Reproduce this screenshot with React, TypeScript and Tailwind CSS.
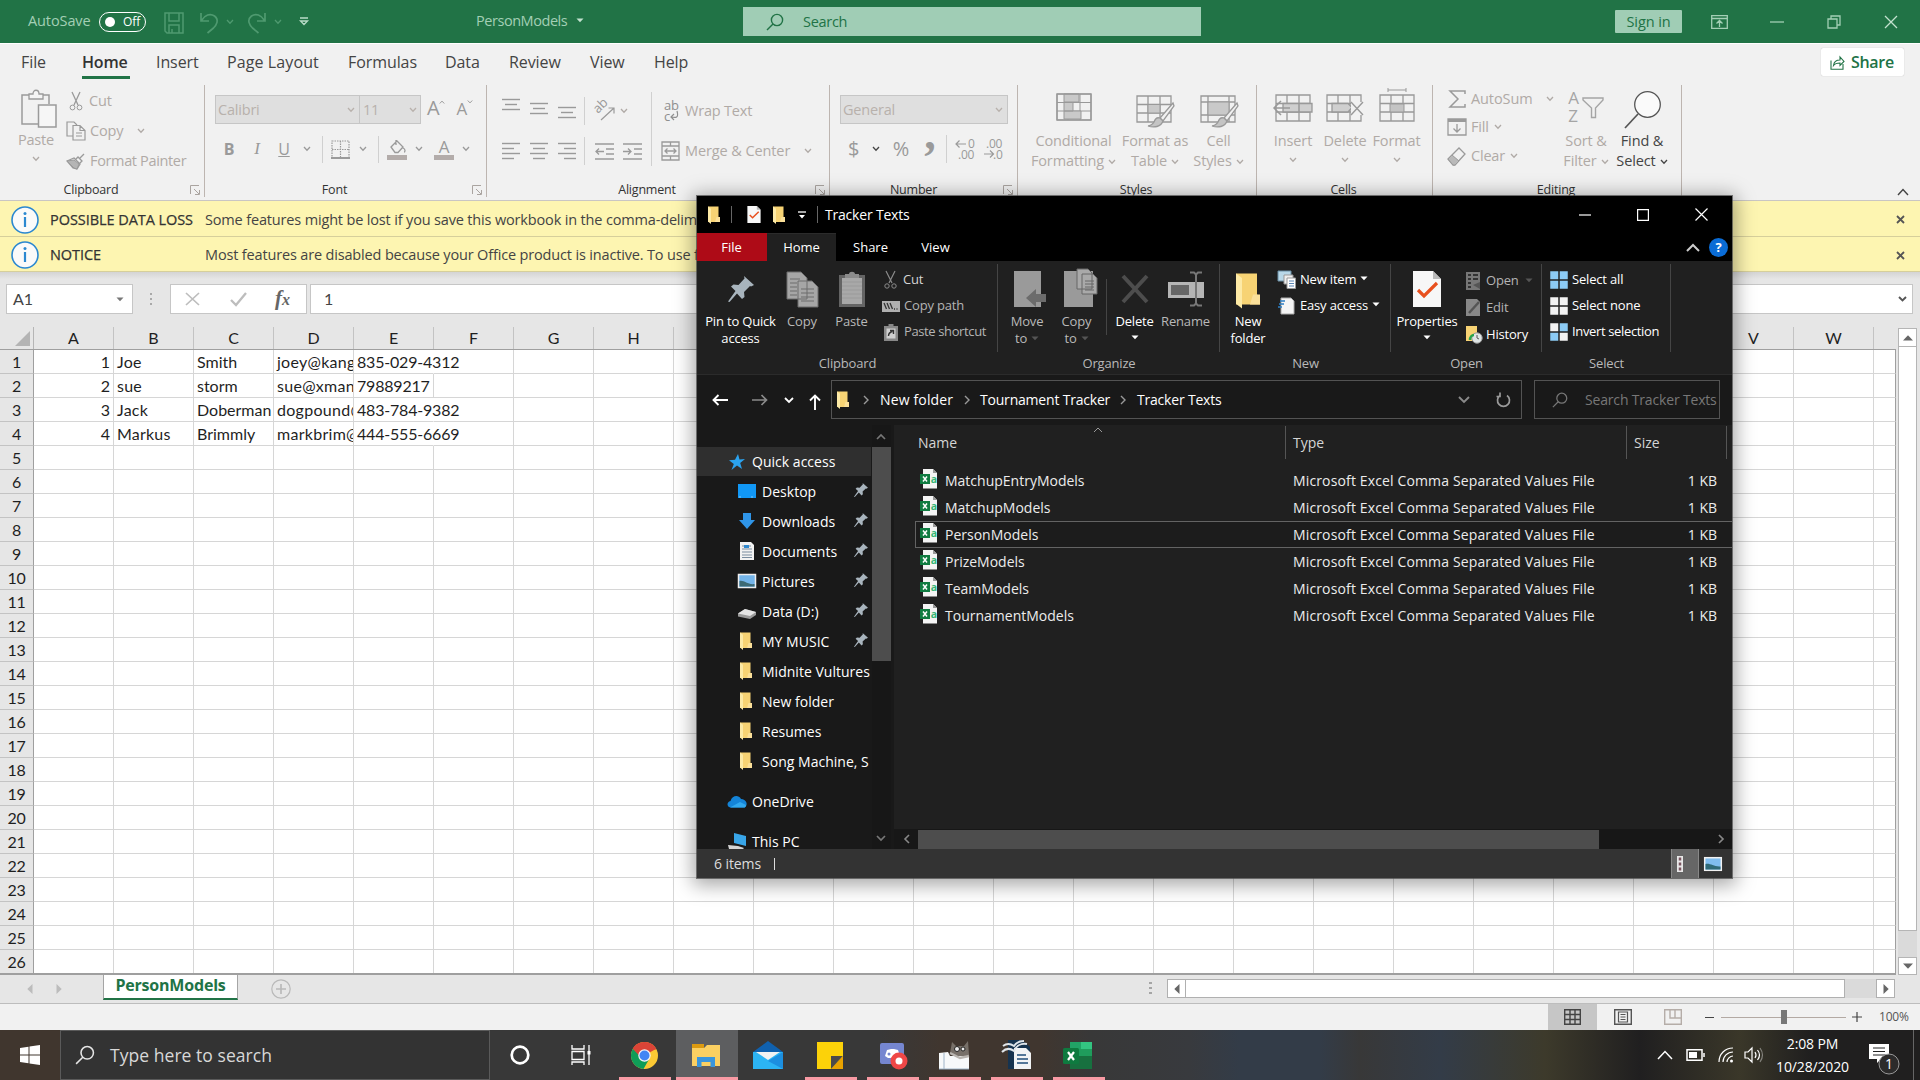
import React from "react";

type P = { className?: string; children?: React.ReactNode };

/* ---------- shared small pieces ---------- */

function Svg({ w, h, c = "", vb, children }: { w: number; h: number; c?: string; vb?: string; children?: React.ReactNode }) {
  return (
    <svg width={w} height={h} viewBox={vb ?? `0 0 ${w} ${h}`} fill="none" stroke="currentColor" className={`shrink-0 overflow-visible ${c}`}>
      {children}
    </svg>
  );
}

const Chev = ({ c = "" }: { c?: string }) => (
  <Svg w={8} h={6} c={c}><path d="M1 1l3 3.2L7 1" strokeWidth="1.3" /></Svg>
);
const Tri = ({ c = "" }: { c?: string }) => (
  <Svg w={8} h={5} c={c}><path d="M0.5 .5h7L4 4.3z" fill="currentColor" stroke="none" /></Svg>
);
const BigTri = ({ c = "" }: { c?: string }) => (
  <Svg w={10} h={6} c={c}><path d="M0 .5h10L5 5.700z" fill="currentColor" stroke="none" /></Svg>
);
const Rule = ({ className = "" }: P) => <div className={`w-px shrink-0 ${className}`} />;

const Folder = ({ w = 14, h = 18, c = "" }: { w?: number; h?: number; c?: string }) => (
  <Svg w={w} h={h} vb="0 0 14 18" c={c}>
    <path d="M1 0.5h10.5v10.5l1.5 1v4H1z" fill="#f7d374" stroke="none" />
    <path d="M9.5 11h3.5v5H8z" fill="#fbe09a" stroke="none" />
    <path d="M1 .5l3 2.3V18L1 15.6z" fill="#fdeaa6" stroke="none" />
  </Svg>
);

const Magnifier = ({ s = 18, c = "" }: { s?: number; c?: string }) => (
  <Svg w={s} h={s} vb="0 0 18 18" c={c}>
    <circle cx="11" cy="7" r="5.6" strokeWidth="1.4" /><path d="M7 11L1 17" strokeWidth="1.4" />
  </Svg>
);

const Check = ({ w, h, c = "" }: { w: number; h: number; c?: string }) => (
  <Svg w={w} h={h} vb="0 0 28 36" c={c}>
    <path d="M0 0h20l8 8v28H0z" fill="#f7f7f7" stroke="none" /><path d="M20 0v8h8z" fill="#b9b9b9" stroke="none" />
    <path d="M5 19l6 6L24 12" stroke="#e8501e" strokeWidth="3.2" />
  </Svg>
);

/* ---------- Excel: title bar and tabs ---------- */

function TitleBar() {
  return (
    <div className="flex h-[43px] items-center bg-[#217346] pl-[28px] text-[14.5px] tracking-[-0.1px] text-[#a3cfb5]">
      <div className="w-[67px] shrink-0 pb-[1px]">AutoSave</div>
      <div className="ml-[4px] flex h-[20px] w-[47px] shrink-0 items-center rounded-full border border-white pl-[5px] text-[12px] text-white">
        <div className="mr-[8px] h-[10px] w-[10px] rounded-full bg-white" />Off
      </div>
      <Svg w={20} h={22} c="ml-[18px] mt-[3px] text-[#4f9a70]"><path d="M1 1h18v20H3l-2-2zM5 1v8h10V1M5 21v-8h10v8M8 21v-4" strokeWidth="1.5" /></Svg>
      <Svg w={19} h={22} c="ml-[16px] mt-[3px] text-[#4f9a70]"><path d="M1 1v8h8M1.5 8.5C5 3 10 1 14.500 4c5 4 2 9-1 12l-6 5" strokeWidth="1.7" /></Svg>
      <Chev c="ml-[7px] text-[#4f9a70]" />
      <Svg w={19} h={22} c="ml-[13px] mt-[3px] text-[#4f9a70]"><path d="M18 1v8h-8M17.500 8.500C14 3 9 1 4.500 4c-5 4-2 9 1 12l6 5" strokeWidth="1.7" /></Svg>
      <Chev c="ml-[8px] text-[#4f9a70]" />
      <Svg w={10} h={9} c="ml-[17px] text-[#b9dcc8]"><path d="M1 1h8M1.500 4h7L5 7.500z" strokeWidth="1.300" /></Svg>
      <div className="ml-[167px] w-[94px] shrink-0 pb-[2px] tracking-[-0.450px]">PersonModels</div>
      <Tri c="ml-[6px] mb-[2px] text-[#c3e2cf]" />
      <div className="ml-[159px] flex h-[29px] w-[458px] shrink-0 items-center bg-[#a0cdb5] pl-[23px] text-[#217346]">
        <Magnifier /><span className="ml-[19px] tracking-[-0.3px]">Search</span>
      </div>
      <div className="ml-[414px] flex h-[23px] w-[67px] shrink-0 items-center justify-center rounded-[1px] bg-[#a0cdb5] tracking-[-0.1px] text-[#217346]">Sign in</div>
      <Svg w={17} h={14} c="ml-[29px]"><path d="M.7.7h15.600v12.600H.7zM.7 3.500h15.600M8.500 12V6M5.500 8.500l3-3 3 3" strokeWidth="1.300" /></Svg>
      <Svg w={14} h={2} c="ml-[42px]"><path d="M0 1h14" strokeWidth="1.300" /></Svg>
      <Svg w={14} h={14} c="ml-[43px]"><path d="M1 4h9v9H1zM4 4V1h9v9h-3" strokeWidth="1.300" /></Svg>
      <Svg w={14} h={14} c="ml-[43px] text-[#c3e2cf]"><path d="M1 1l12 12M13 1L1 13" strokeWidth="1.300" /></Svg>
    </div>
  );
}

function RibbonTabs() {
  return (
    <div className="flex h-[38px] border-t border-white text-[16px] leading-[36px] tracking-[-0.080px] text-[#444]">
      <div className="ml-[21px] w-[61px]">File</div>
      <div className="relative w-[74px] font-semibold tracking-[-0.150px] text-[#333]">Home<div className="absolute bottom-[2px] left-0 h-[3px] w-[48px] bg-[#217346]" /></div>
      <div className="w-[71px]">Insert</div>
      <div className="w-[121px] tracking-[0.100px]">Page Layout</div>
      <div className="w-[97px]">Formulas</div>
      <div className="w-[64px]">Data</div>
      <div className="w-[81px]">Review</div>
      <div className="w-[64px]">View</div>
      <div className="w-[1167px]">Help</div>
      <div className="mt-[4px] flex h-[28px] w-[83px] items-center rounded-[2px] bg-white pl-[9px] font-semibold leading-none tracking-[-0.300px] text-[#217346] shadow-[0_0_1px_#aaa]">
        <Svg w={15} h={15} c="mr-[6px]"><path d="M1 5.500v8.800h12V9M3.500 10.500C4 6.500 6.500 5 10 5V2l4 4.500-4 4V8C7 8 5 8.500 3.500 10.500z" strokeWidth="1.100" /></Svg>
        Share
      </div>
    </div>
  );
}

/* ---------- Excel: ribbon ---------- */

function Group({ className = "", label, launcher, children }: P & { label: string; launcher?: boolean }) {
  return (
    <div className={`flex h-full shrink-0 flex-col border-r border-[#bdb5b0] ${className}`}>
      <div className="flex h-[97px] shrink-0 pt-[1px]">{children}</div>
      <div className="relative text-center text-[12.500px] leading-[16px] tracking-[-0.200px] text-[#333]">
        {label}
        {launcher && <Svg w={10} h={10} c="absolute right-[4px] top-[3px] text-[#aaa4a0]"><path d="M.5 9V.5H9M4 4l5 5M9.500 5v4.500H5" /></Svg>}
      </div>
    </div>
  );
}

function Big({ className = "", icon, a, b, solo }: P & { icon: React.ReactNode; a: string; b?: string; solo?: boolean }) {
  return (
    <div className={`flex shrink-0 flex-col items-center whitespace-nowrap text-[14.500px] leading-[20px] tracking-[-0.120px] ${className}`}>
      <div className="flex h-[45px] items-end justify-center pb-[2px]">{icon}</div>
      <div>{a}</div>
      {solo ? <Chev c="mt-[6px]" /> : <div className="flex items-center gap-[4px]">{b}<Chev c="mb-[-1px]" /></div>}
    </div>
  );
}

const Lines = ({ rows, y = 0, c = "" }: { rows: [number, number][]; y?: number; c?: string }) => (
  <Svg w={18} h={24} c={`text-[#9a9a9a] ${c}`}>
    {rows.map(([a, b], i) => <path key={i} d={`M${a} ${y + 1.500 + i * 5}H${b}`} strokeWidth="1.400" />)}
  </Svg>
);

const gridBase = "M1 1h34v26H1zM1 9.500h34M1 18h34M12 1v26M24 1v26";
const Brush = () => (
  <>
    <path d="M37 8L24 23l3 3L38 11z" fill="#f1f1f1" strokeWidth="1.300" />
    <path d="M24 23c-3-1-5 1-6 4-1 2-4 4-6 4 6 2 13 1 15-5z" fill="#c4c4c4" strokeWidth="1.300" />
  </>
);

function Ribbon() {
  return (
    <div className="h-[120px] border-b border-[#c9c6c3] pt-[4px] text-[#b0aaa6]">
      <div className="flex h-[112px] text-[14.500px] tracking-[-0.200px]">
        <Group className="w-[205px] [&>div:last-child]:pr-[22px]" label="Clipboard" launcher>
          <div className="ml-[14px] flex w-[48px] flex-col items-center">
            <Svg w={36} h={40} c="mt-[3px] ml-[2px] text-[#9a9a9a]">
              <path d="M17 35H1V6h7M21 6h7v9" strokeWidth="1.500" /><path d="M8 10V5h4c0-5 6-5 6 0h4v5z" strokeWidth="1.300" fill="#f4f4f4" />
              <path d="M17.500 16H35v22H17.500z" strokeWidth="1.500" fill="#f6f6f6" />
            </Svg>
            <div className="-ml-[4px] mt-[1px] leading-[20px]">Paste</div><Chev c="-ml-[4px] mt-[6px]" />
          </div>
          <div className="ml-[4px] flex flex-col">
            <div className="flex h-[30px] items-center"><Svg w={14} h={20} c="ml-[3px] mr-[6px] text-[#9a9a9a]"><path d="M3 1l6 13M11 1L5 14" strokeWidth="1.300" /><circle cx="3.500" cy="16.500" r="2.400" /><circle cx="10.500" cy="16.500" r="2.400" /></Svg>Cut</div>
            <div className="flex h-[30px] items-center"><Svg w={20} h={20} c="mr-[4px] text-[#9a9a9a]"><path d="M7 15H1V1h7l3 3M7 4.500h7l5 5V19H7zM14 4.500v5h5M10 12h6M10 15h6" strokeWidth="1.200" /></Svg>Copy<Chev c="ml-[14px]" /></div>
            <div className="flex h-[30px] items-center"><Svg w={20} h={18} c="mr-[4px] text-[#9a9a9a]"><path d="M1 9l7-3 6 6-3 5-4-1-6-7zM10 7l2-2 4 4-2 2M14 6l4-4M8 6l6 6" strokeWidth="1.300" /><path d="M1 9l7 7 3 1 2-5-5-4z" fill="#b5b5b5" /></Svg><span className="tracking-[-0.350px]">Format Painter</span></div>
          </div>
        </Group>

        <Group className="w-[282px] [&>div:last-child]:pr-[22px]" label="Font" launcher>
          <div className="ml-[10px] flex flex-col">
            <div className="mt-[9px] flex">
              <div className="flex h-[29px] w-[145px] items-center justify-between border border-[#c6c6c6] bg-[#dfdfdf] pl-[2px] pr-[4px] text-[#b8b1ac]">Calibri<Chev /></div>
              <div className="-ml-px flex h-[29px] w-[62px] items-center justify-between border border-[#c6c6c6] bg-[#dfdfdf] pl-[3px] pr-[3px] text-[#b8b1ac]">11<Chev /></div>
              <div className="ml-[6px] flex text-[20px] leading-[26px] text-[#9a9a9a]">A<Chev c="mt-[4px] ml-[-1px] rotate-180 scale-75" /></div>
              <div className="ml-[10px] flex text-[17px] leading-[28px] text-[#9a9a9a]">A<Chev c="mt-[4px] ml-[-1px] scale-75" /></div>
            </div>
            <div className="mt-[8px] flex h-[34px] items-center text-[17px] text-[#9a9a9a]">
              <div className="w-[28px] text-center text-[16px] font-bold">B</div>
              <div className="w-[28px] text-center font-['Liberation_Serif',serif] italic">I</div>
              <div className="w-[26px] text-center text-[16px] underline">U</div>
              <Chev c="ml-[6px]" /><Rule className="ml-[11px] h-[27px] bg-[#d0d0d0]" />
              <Svg w={19} h={19} c="ml-[8px]"><path d="M1 1h17v17H1zM9.500 1v17M1 9.500h17" strokeDasharray="1.500 1" strokeWidth="1.200" /><path d="M0 18h19" strokeWidth="2" /></Svg>
              <Chev c="ml-[9px]" /><Rule className="ml-[11px] h-[27px] bg-[#d0d0d0]" />
              <Svg w={20} h={21} c="ml-[8px]"><path d="M4 8l6-6 6 6-5 5.500H8zM9 6V1M16 9c3 1 2 4 1 4" strokeWidth="1.300" /><path d="M0 16h20v5H0z" fill="#b3acaa" stroke="none" /></Svg>
              <Chev c="ml-[8px]" />
              <div className="ml-[11px] flex flex-col items-center"><span className="text-[17px] leading-[16px]">A</span><div className="h-[5px] w-[20px] bg-[#b3acaa]" /></div>
              <Chev c="ml-[8px]" />
            </div>
          </div>
        </Group>

        <Group className="w-[343px] [&>div:last-child]:pr-[22px]" label="Alignment" launcher>
          <div className="ml-[15px] flex w-[149px] flex-col">
            <div className="mt-[8px] flex h-[33px] items-center">
              <Lines c="mb-[2px]" rows={[[0, 18], [3, 15], [0, 18]]} />
              <Lines c="ml-[10px] mt-[6px]" rows={[[0, 18], [3, 15], [0, 18]]} />
              <Lines c="ml-[10px] mt-[14px]" rows={[[0, 18], [3, 15], [0, 18]]} />
              <Rule className="ml-[8px] h-[28px] bg-[#d0d0d0]" />
              <Svg w={22} h={21} c="ml-[8px] text-[#9a9a9a]"><text x="0" y="0" fontSize="13" fill="currentColor" stroke="none" transform="translate(5 14) rotate(-45)">ab</text><path d="M8 20L21 8M15.500 8H21v5.500" strokeWidth="1.200" /></Svg>
              <Chev c="ml-[5px]" />
            </div>
            <div className="mt-[7px] flex h-[34px] items-center">
              <Lines c="mt-[6px]" rows={[[0, 18], [0, 12], [0, 18], [0, 12]]} />
              <Lines c="ml-[10px] mt-[6px]" rows={[[0, 18], [3, 15], [0, 18], [3, 15]]} />
              <Lines c="ml-[10px] mt-[6px]" rows={[[0, 18], [6, 18], [0, 18], [6, 18]]} />
              <Rule className="ml-[8px] h-[28px] bg-[#d0d0d0]" />
              <Svg w={19} h={19} c="ml-[10px] text-[#9a9a9a]"><path d="M0 2h19M11 7h8M11 12h8M0 17h19M1 9.500h8M4 6.500l-3 3 3 3" strokeWidth="1.300" /></Svg>
              <Svg w={19} h={19} c="ml-[9px] text-[#9a9a9a]"><path d="M0 2h19M11 7h8M11 12h8M0 17h19M0 9.500h8M5 6.500l3 3-3 3" strokeWidth="1.300" /></Svg>
            </div>
          </div>
          <Rule className="mt-[6px] h-[74px] bg-[#d0d0d0]" />
          <div className="ml-[9px] flex flex-col">
            <div className="mt-[8px] flex h-[33px] items-center">
              <div className="w-[24px] pl-[3px] text-[13px] leading-[11px] text-[#8f8f8f]">ab<br /><span className="flex">c<Svg w={9} h={11}><path d="M7 0c2 7-1 7-6 6M4 3L1 6l3 3" strokeWidth="1.200" /></Svg></span></div>Wrap Text
            </div>
            <div className="mt-[7px] flex h-[34px] items-center">
              <Svg w={19} h={20} c="mr-[5px] text-[#9a9a9a]"><path d="M1 1h17v18H1zM1 5h17M1 15h17M9.500 1v4M9.500 15v4M4 10h11M6.500 7.500L4 10l2.500 2.500M12.500 7.500L15 10l-2.500 2.500" strokeWidth="1.300" /></Svg>
              <span className="tracking-[-0.100px]">Merge &amp; Center</span><Chev c="ml-[14px]" />
            </div>
          </div>
        </Group>

        <Group className="w-[188px] [&>div:last-child]:pr-[20px]" label="Number" launcher>
          <div className="ml-[10px] flex flex-col">
            <div className="mt-[9px] flex h-[29px] w-[168px] items-center justify-between border border-[#c6c6c6] bg-[#dfdfdf] pl-[2px] pr-[4px] text-[#b8b1ac]">General<Chev /></div>
            <div className="mt-[8px] flex h-[34px] items-center text-[20px] text-[#9a9a9a]">
              <div className="w-[27px] text-center">$</div><Chev c="ml-[5px] text-[#444]" />
              <div className="ml-[10px] w-[22px] text-center">%</div>
              <div className="-mt-[30px] ml-[10px] w-[16px] text-center font-['Liberation_Serif',serif] text-[46px] font-bold leading-[8px]">,</div>
              <Rule className="ml-[8px] h-[28px] bg-[#d0d0d0]" />
              <Svg w={20} h={20} c="ml-[9px]"><path d="M0 5h10M3.500 1.500L0 5l3.500 3.500" strokeWidth="1.200" /><text x="12" y="9" fontSize="12" fill="currentColor" stroke="none">0</text><text x="2" y="20" fontSize="12" fill="currentColor" stroke="none">.00</text></Svg>
              <Svg w={20} h={20} c="ml-[8px]"><path d="M0 15h9M6 11.500l3.500 3.500L6 18.500" strokeWidth="1.200" /><text x="2" y="9" fontSize="12" fill="currentColor" stroke="none">.00</text><text x="9" y="20" fontSize="12" fill="currentColor" stroke="none">.0</text></Svg>
            </div>
          </div>
        </Group>

        <Group className="w-[239px] [&>div:last-child]:pr-[2px]" label="Styles">
          <Big className="ml-[9px] w-[93px]" a="Conditional" b="Formatting" icon={
            <Svg w={36} h={36} c="pb-[8px] text-[#999]" vb="0 0 36 28"><path d={gridBase} /><path d="M8 1h15v8H8zM8 9.500h9v8.500H8zM8 18h17v8H8z" fill="#c9c9c9" /><rect x="1" y="1" width="34" height="26" strokeWidth="1.500" /></Svg>} />
          <Big className="w-[70px]" a="Format as" b="Table" icon={
            <Svg w={39} h={34} c="ml-[1px] text-[#999]"><path d={gridBase} strokeWidth="1.300" /><path d="M12 9.500h12V18H12z" fill="#c9c9c9" /><Brush /></Svg>} />
          <Big className="w-[57px]" a="Cell" b="Styles" icon={
            <Svg w={39} h={34} c="ml-[1px] text-[#999]"><path d="M1 1h34v26H1zM1 7h34M1 20h34M8 1v26M29 1v26" strokeWidth="1.300" /><path d="M8 7h21v13H8z" fill="#c9c9c9" /><Brush /></Svg>} />
        </Group>

        <Group className="w-[176px] [&>div:last-child]:pr-[2px]" label="Cells">
          <Big className="ml-[11px] w-[50px]" a="Insert" solo icon={
            <Svg w={40} h={35} c="pb-[7px] text-[#999]" vb="0 0 40 28"><path d="M3 1h34v26H3zM3 9.500h34M3 18h34M14 1v26M26 1v26" strokeWidth="1.300" /><path d="M10 9.500h29v8.500H10z" fill="#cfcfcf" strokeWidth="1.300" /><path d="M26 9.500V18M1 14h16M8 7l-7 7 7 7" strokeWidth="1.500" /></Svg>} />
          <Big className="w-[54px]" a="Delete" solo icon={
            <Svg w={38} h={35} c="pb-[7px] text-[#999]" vb="0 0 38 28"><path d={gridBase} strokeWidth="1.300" /><path d="M6 9.500h16l4 4-4 4.500H6z" fill="#cfcfcf" strokeWidth="1.300" /><path d="M25 8h12v13H25z" fill="#f1f1f1" stroke="none" /><path d="M25 8l12 13M37 8L25 21" strokeWidth="1.400" /></Svg>} />
          <Big className="w-[49px]" a="Format" solo icon={
            <Svg w={36} h={41} c="pb-[7px] text-[#999]" vb="0 -6 36 34"><path d={gridBase} strokeWidth="1.300" /><path d="M11 10h14v8H11z" fill="#c4c4c4" /><path d="M9-4h18M9-6v4M27-6v4" /></Svg>} />
        </Group>

        <Group className="w-[249px] [&>div:last-child]:pr-[2px]" label="Editing">
          <div className="ml-[14px] flex w-[117px] flex-col">
            <div className="flex h-[24px] items-end"><Svg w={17} h={18} c="ml-[2px] mr-[5px] mb-[2px] text-[#9a9a9a]"><path d="M16 4V1H1l8 8-8 8h15v-3" strokeWidth="1.500" /></Svg><span className="tracking-[-0.100px]">AutoSum</span><Chev c="ml-[13px] mb-[8px]" /></div>
            <div className="mt-[3px] flex h-[28px] items-center"><Svg w={20} h={18} c="mr-[4px] text-[#9a9a9a]"><path d="M1 1h18v16H1zM10 6v8M6.500 10.500L10 14l3.500-3.500" strokeWidth="1.300" /><path d="M1 2.500h18" strokeWidth="3" /></Svg>Fill<Chev c="ml-[5px]" /></div>
            <div className="flex h-[30px] items-center"><Svg w={20} h={19} c="mr-[4px] text-[#9a9a9a]"><path d="M1 12L12 1l6 6L8 18H6z" strokeWidth="1.300" /><path d="M1 12l4-4 7 6-4 4H6z" fill="#b9b9b9" /></Svg>Clear<Chev c="ml-[5px]" /></div>
          </div>
          <Big className="w-[44px]" a="Sort &" b="Filter" icon={
            <div className="flex h-[40px] items-start text-[17px] leading-[18px] text-[#a5a5a5]"><div>A<br />Z</div><Svg w={22} h={22} c="ml-[3px] mt-[8px]"><path d="M1 1h20v2l-7.500 8v9.500h-4V11L1 3z" strokeWidth="1.400" /></Svg></div>} />
          <Big className="ml-[5px] w-[58px] text-[#444]" a="Find &" b="Select" icon={
            <Svg w={37} h={38} c="text-[#555]"><circle cx="23.500" cy="13.500" r="12.800" fill="#fafafa" strokeWidth="1.300" /><path d="M14 23L1 37" strokeWidth="1.700" /></Svg>} />
        </Group>
        <Svg w={12} h={8} c="ml-[215px] mt-[103px] text-[#444]"><path d="M1 7l5-5.500L11 7" strokeWidth="1.400" /></Svg>
      </div>
    </div>
  );
}

/* ---------- Excel: notices, formula bar, sheet ---------- */

function Notice({ title, text }: { title: string; text: string }) {
  return (
    <div className="flex h-[35.500px] items-center border-b border-[#d6cf9b] bg-[#fdf5b1] pl-[11px] pt-[3px] text-[14.500px] tracking-[-0.160px] text-[#444]">
      <Svg w={28} h={28} c="text-[#2b88d0]"><circle cx="14" cy="14" r="13" fill="#fafafa" strokeWidth="1.600" /><path d="M14 11v10" strokeWidth="2.200" /><circle cx="14" cy="7.500" r="1.500" fill="currentColor" stroke="none" /></Svg>
      <div className="ml-[11px] w-[155px] tracking-[-0.060px] text-[#333] [-webkit-text-stroke:0.25px_#333]">{title}</div>
      <div className="w-[1680px] overflow-hidden whitespace-nowrap">{text}</div>
      <Svg w={9} h={9} c="ml-auto mr-[15px] text-[#555]"><path d="M1 1l7 7M8 1L1 8" strokeWidth="1.800" /></Svg>
    </div>
  );
}

function FormulaBar() {
  return (
    <div className="flex h-[55px] items-start bg-[#e6e6e6] bg-[linear-gradient(#d4d4d4,#e6e6e6_7px)] pt-[12px] font-['Lato'] text-[16px] text-[#444]">
      <div className="ml-[6px] flex h-[30px] w-[127px] items-center justify-between border border-[#c6c6c6] bg-white pl-[6px] pr-[8px]">A1<Tri c="text-[#777]" /></div>
      <div className="ml-[17px] flex h-[30px] flex-col justify-center gap-[3px]"><i className="h-[2px] w-[2px] bg-[#a9a9a9]" /><i className="h-[2px] w-[2px] bg-[#a9a9a9]" /><i className="h-[2px] w-[2px] bg-[#a9a9a9]" /></div>
      <div className="ml-[18px] flex h-[30px] w-[137px] items-center border border-[#c6c6c6] bg-white">
        <Svg w={15} h={14} c="ml-[14px] text-[#bdbdbd]"><path d="M1 1l13 12M14 1L1 13" strokeWidth="1.700" /></Svg>
        <Svg w={17} h={14} c="ml-[30px] text-[#bdbdbd]"><path d="M1 8l5 5L16 1" strokeWidth="2.300" /></Svg>
        <span className="ml-[28px] font-['Liberation_Serif',serif] text-[21px] font-bold italic text-[#666]">f<span className="text-[16px]">x</span></span>
      </div>
      <div className="ml-[3px] flex h-[30px] w-[1603px] items-center justify-between border border-[#c6c6c6] bg-white pl-[13px] pr-[5px]">1<Svg w={9} h={6} c="text-[#555]"><path d="M1 1l3.500 3.500L8 1" strokeWidth="1.900" /></Svg></div>
    </div>
  );
}

const columns = "ABCDEFGHIJKLMNOPQRSTUVW".split("");
const data: string[][] = [
  ["1", "Joe", "Smith", "joey@kangaroo.com", "835-029-4312"],
  ["2", "sue", "storm", "sue@xmansion.com", "79889217"],
  ["3", "Jack", "Doberman", "dogpound@mail.com", "483-784-9382"],
  ["4", "Markus", "Brimmly", "markbrim@mail.com", "444-555-6669"],
];
const tracking = ["", "tracking-[0.200px]", "", "tracking-[0.280px]", "tracking-[-0.200px]"];

function Sheet() {
  return (
    <div className="flex h-[648px] bg-[#e6e6e6] font-['Lato'] text-[16px] text-[#1f1f1f]">
      <div className="w-[1896px] overflow-hidden border-b-2 border-[#9f9f9f]">
        <div className="flex h-[23px] border-b border-[#9f9f9f] leading-[22px]">
          <div className="flex w-[34px] shrink-0 justify-end border-r border-[#b5b5b5] pr-[3px] pt-[4px]">
            <Svg w={15} h={15}><path d="M15 0v15H0z" fill="#b4b4b4" stroke="none" /></Svg>
          </div>
          {columns.map((c) => <div key={c} className="w-[80px] shrink-0 border-r border-[#c3c3c3] text-center">{c}</div>)}
        </div>
        {Array.from({ length: 26 }, (_, r) => (
          <div key={r} className="flex h-[24px] bg-white leading-[24px]">
            <div className="w-[34px] shrink-0 border-b border-r border-b-[#c3c3c3] border-r-[#9f9f9f] bg-[#e6e6e6] text-center tracking-[-0.300px]">{r + 1}</div>
            {columns.map((c, i) => {
              const v = data[r]?.[i];
              const spill = i === 4 && v !== undefined && v.length > 8;
              return (
                <div key={c} className={`w-[80px] shrink-0 whitespace-nowrap border-b border-b-[#d6d6d6] border-r ${spill ? "border-r-transparent" : "overflow-hidden border-r-[#d6d6d6]"} ${i === 0 ? "pr-[3px] text-right" : "pl-[3px]"} ${tracking[i] ?? ""}`}>{v}</div>
              );
            })}
            <div className="w-[22px] shrink-0 border-b border-r border-[#d6d6d6] border-r-[#9f9f9f]" />
          </div>
        ))}
      </div>
      <div className="ml-[2px] flex w-[19px] flex-col">
        <div className="mt-[1px] flex h-[19px] items-center justify-center border border-[#b5b5b5] bg-white"><BigTri c="rotate-180 text-[#666]" /></div>
        <div className="-mt-px h-[585px] border border-[#b5b5b5] bg-white" />
        <div className="h-[26px] bg-[#dadada]" />
        <div className="flex h-[18px] items-center justify-center border border-[#b5b5b5] bg-white"><BigTri c="text-[#666]" /></div>
      </div>
    </div>
  );
}

function SheetTabs() {
  return (
    <div className="flex h-[29px] border-b border-[#bdbdbd] bg-[#e6e6e6]">
      <BigTri c="ml-[25px] mt-[11px] rotate-90 text-[#bcbcbc]" />
      <BigTri c="ml-[19px] mt-[11px] -rotate-90 text-[#bcbcbc]" />
      <div className="ml-[39px] h-[25px] w-[135px] whitespace-nowrap border-x border-b-[2px] border-x-[#a5a5a5] border-b-[#217346] bg-white text-center text-[16px] font-bold leading-[21px] tracking-[-0.200px] text-[#217346]">PersonModels</div>
      <Svg w={20} h={20} c="ml-[33px] mt-[4px] text-[#b9b9b9]"><circle cx="10" cy="10" r="9.200" strokeWidth="1.200" /><path d="M10 5v10M5 10h10" strokeWidth="1.700" /></Svg>
      <div className="ml-[858px] mt-[7px] flex flex-col gap-[3px]"><i className="h-[2px] w-[3px] bg-[#a5a5a5]" /><i className="h-[2px] w-[3px] bg-[#a5a5a5]" /><i className="h-[2px] w-[3px] bg-[#a5a5a5]" /></div>
      <div className="ml-[15px] mt-[4px] flex h-[19px] w-[728px] bg-[#dadada]">
        <div className="flex w-[19px] items-center justify-center border border-[#b0b0b0] bg-white"><BigTri c="rotate-90 text-[#666]" /></div>
        <div className="-ml-px w-[660px] border border-[#b0b0b0] bg-white" />
        <div className="ml-auto flex w-[19px] items-center justify-center border border-[#b0b0b0] bg-white"><BigTri c="-rotate-90 text-[#666]" /></div>
      </div>
    </div>
  );
}

function StatusBar() {
  return (
    <div className="flex h-[26px] items-center bg-[#f1f1f1] text-[#444]">
      <div className="ml-[1548px] flex h-full w-[49px] items-center justify-center bg-[#c6c6c6]"><Svg w={17} h={16}><path d="M.7.7h15.600v14.600H.7zM.7 5.500h15.600M.7 10.500h15.600M6 1v14M11 1v14" strokeWidth="1.400" /></Svg></div>
      <Svg w={18} h={16} c="ml-[17px] text-[#555]"><path d="M.7.7h16.600v14.600H.7z" strokeWidth="1.400" /><path d="M4.500 3h9v10h-9zM6.500 5.500h5M6.500 8h5M6.500 10.500h5" strokeWidth="1.200" /></Svg>
      <Svg w={18} h={16} c="ml-[32px] text-[#b5ada8]"><path d="M.7.7h16.600v14.600H.7zM6 1v8h11M11 1v8" strokeWidth="1.400" /></Svg>
      <div className="ml-[23px] h-px w-[9px] bg-[#444]" />
      <div className="relative ml-[7px] h-px w-[125px] bg-[#b3a9a3]"><div className="absolute -top-[7px] left-[60px] h-[14px] w-[6px] bg-[#777]" /></div>
      <Svg w={10} h={10} c="ml-[6px]"><path d="M5 0v10M0 5h10" strokeWidth="1.200" /></Svg>
      <div className="ml-[17px] text-[12px] tracking-[-0.200px] text-[#555]">100%</div>
    </div>
  );
}

/* ---------- File Explorer ---------- */

const Pin = ({ s = 14, c = "" }: { s?: number; c?: string }) => (
  <Svg w={s} h={s} vb="0 0 26 26" c={c}><path d="M16 0l10 9-3 1.500-1-.5-6 6 .5 5-2.500 2-5-5.500L1.500 26 0 25.500 7.500 15 3 10.500l2.500-2 5 .5 6-6.500z" fill="#a8b4bd" stroke="none" /></Svg>
);

function XBtn({ className = "", icon, a, b, dim, drop }: P & { icon: React.ReactNode; a: string; b?: string; dim?: boolean; drop?: boolean }) {
  return (
    <div className={`flex shrink-0 flex-col items-center whitespace-nowrap leading-[17px] ${dim ? "text-[#b9b9b9]" : "text-white"} ${className}`}>
      <div className="flex h-[49px] items-center pt-[1px]">{icon}</div>
      <div>{a}</div>
      <div className="flex h-[17px] items-center gap-[4px]">{b}{drop && <Tri c={dim ? "text-[#555]" : b ? "" : "-mt-[3px]"} />}</div>
    </div>
  );
}

function XGroup({ className = "", label, children }: P & { label: string }) {
  return (
    <div className={`flex h-[113px] shrink-0 flex-col ${className}`}>
      <div className="mt-[3px] h-[88px] border-r border-[#454545]"><div className="flex h-full">{children}</div></div>
      <div className="pt-[2px] text-center leading-[18px] text-[#b9b9b9]">{label}</div>
    </div>
  );
}

const Line = ({ icon, dim, children, className = "" }: P & { icon: React.ReactNode; dim?: boolean }) => (
  <div className={`flex h-[26px] items-center whitespace-nowrap ${dim ? "text-[#b4b4b4]" : "text-white"} ${className}`}>{icon}{children}</div>
);

const Tiles = ({ f }: { f: string[] }) => (
  <Svg w={18} h={18} c="mr-[4px]">
    {f.map((k, i) => <rect key={i} x={(i % 2) * 9.500 + 0.250} y={Math.floor(i / 2) * 9.500 + 0.250} width="8" height="8" fill={k} stroke="none" />)}
  </Svg>
);

function ExplorerRibbon() {
  return (
    <div className="flex h-[114px] border-b border-[#2b2b2b] bg-[#202020] text-[13px] tracking-[-0.180px]">
      <XGroup className="w-[301px]" label="Clipboard">
        <XBtn className="ml-[5px] w-[77px]" icon={<Pin s={26} />} a="Pin to Quick" b="access" />
        <XBtn className="w-[46px]" dim a="Copy" icon={
          <Svg w={31} h={36} c="text-[#6d6d6d]"><path d="M0 1h14l6 6v21H0zM11 10h14l6 6v20H11z" fill="#a6a6a6" /><path d="M3 8h10M3 12h7M3 16h7M3 20h7M3 24h7M14 18h13M14 22h13M14 26h13M14 30h13" /></Svg>} />
        <XBtn className="w-[53px]" dim a="Paste" icon={
          <Svg w={26} h={36}><path d="M0 4h26v32H0z" fill="#646464" stroke="none" /><path d="M3 7h20v26H3z" fill="#a8a8a8" stroke="none" /><path d="M6 7V3h4c0-3 6-3 6 0h4v4z" fill="#8b8b8b" stroke="none" /><path d="M3 11h20M3 15h20M3 19h20M3 23h20M3 27h20" stroke="#9a9a9a" /></Svg>} />
        <div className="ml-[4px] mt-[3px]">
          <Line className="text-[#d5d5d5]" icon={<Svg w={13} h={18} c="ml-[2px] mr-[6px] text-[#8a8a8a]"><path d="M2 0l6 12M11 0L5 12" strokeWidth="1.200" /><circle cx="3" cy="15" r="2.200" /><circle cx="10" cy="15" r="2.200" /></Svg>} dim>Cut</Line>
          <Line icon={<Svg w={18} h={11} c="mr-[4px]"><rect width="18" height="11" fill="#b0b0b0" stroke="none" /><path d="M2 2l2.500 6M5 2l2.500 6M8 2l2.500 6M12 8h1M14.500 8h1" stroke="#333" strokeWidth="1.300" /></Svg>} dim>Copy path</Line>
          <Line className="tracking-[-0.380px]" icon={<Svg w={14} h={17} c="ml-[2px] mr-[6px]"><path d="M0 2h14v15H0z" fill="#888" stroke="none" /><path d="M2.500 4.500h9v10h-9z" fill="#d0d0d0" stroke="none" /><path d="M4.500 2V0h5v2z" fill="#888" stroke="none" /><path d="M4.500 12c0-3 2-4 4-4.500M6 6.500h3.500V10" stroke="#333" strokeWidth="1.400" /></Svg>} dim>Paste shortcut</Line>
        </div>
      </XGroup>
      <XGroup className="w-[222px]" label="Organize">
        <XBtn className="ml-[4px] w-[50px]" dim a="Move" b="to" drop icon={
          <Svg w={32} h={36} c="ml-[6px]"><path d="M0 0h27v36H0z" fill="#9a9a9a" stroke="none" /><path d="M12 27l10-9v5h10v8H22v5z" fill="#6c6c6c" stroke="none" /></Svg>} />
        <XBtn className="w-[49px]" dim a="Copy" b="to" drop icon={
          <Svg w={34} h={38} c="ml-[8px] -mt-[2px]"><path d="M0 2h29v36H0z" fill="#9a9a9a" stroke="none" /><path d="M13 0h11l4 4v16H13zM18 5h11l4 4v16H18z" fill="#a9a9a9" stroke="#666" /><path d="M21 12h9M21 15h9M21 18h9M21 21h9" stroke="#666" /></Svg>} />
        <Rule className="ml-[5px] mt-[15px] h-[56px] bg-[#454545]" />
        <XBtn className="w-[55px]" a="Delete" drop icon={<Svg w={28} h={30} c="text-[#4d4d4d]"><path d="M2 2l24 26M26 2L2 28" strokeWidth="4" /></Svg>} />
        <XBtn className="w-[47px]" dim a="Rename" icon={
          <Svg w={36} h={36}><path d="M0 11h36v16H0z" fill="#b5b5b5" stroke="none" /><path d="M3 14h18v10H3z" fill="#666" stroke="none" /><path d="M28 3v30M22 1.500h4l2 2 2-2h4M22 34.500h4l2-2 2 2h4" stroke="#777" strokeWidth="2" /></Svg>} />
      </XGroup>
      <XGroup className="w-[171px]" label="New">
        <XBtn className="ml-[3px] w-[50px]" a="New" b="folder" icon={<Folder w={28} h={37} c="mt-[2px]" />} />
        <div className="ml-[5px] mt-[3px]">
          <Line icon={<Svg w={18} h={18} c="mr-[4px]"><path d="M0 0h13v10H0z" fill="#b9d8e8" stroke="#6a8fa5" /><path d="M6 4h9v9H6z" fill="#eee" stroke="#999" /><path d="M9 7h8.500v10.500H9z" fill="#fff" stroke="#999" /><path d="M11 10h5M11 12.500h5M11 15h5" stroke="#5c86b5" /></Svg>}>New item<Tri c="ml-[4px] -mt-[4px]" /></Line>
          <Line icon={<Svg w={17} h={18} c="mr-[5px]"><path d="M3 1h10l3 3v13H3z" fill="#f5f5f5" stroke="#aaa" /><path d="M2 4h5M1 7h5M0 10h4" stroke="#2e7fc4" strokeWidth="1.300" /></Svg>}>Easy access<Tri c="ml-[4px] -mt-[4px]" /></Line>
        </div>
      </XGroup>
      <XGroup className="w-[151px]" label="Open">
        <XBtn className="ml-[4px] w-[64px]" a="Properties" drop icon={<Check w={28} h={36} />} />
        <div className="ml-[7px] mt-[3px] [&>div]:h-[27px]">
          <Line dim icon={<Svg w={14} h={18} c="mr-[6px]"><path d="M0 0h14v18H0z" fill="#777" stroke="none" /><path d="M2 3h3M2 7h3M2 11h3M2 15h3M7 3h5M7 7h5" stroke="#333" strokeWidth="2" /><path d="M7 13l7-3v7z" fill="#555" stroke="none" /></Svg>}>Open<Tri c="ml-[6px] text-[#555]" /></Line>
          <Line dim icon={<Svg w={14} h={17} c="mr-[6px]"><path d="M0 0h11l3 3v14H0z" fill="#888" stroke="none" /><path d="M3 14L13 3" stroke="#555" strokeWidth="2.500" /></Svg>}>Edit</Line>
          <Line icon={<Svg w={17} h={18} c="mr-[3px]"><path d="M0 0h11v15H0z" fill="#f7d374" stroke="none" /><circle cx="11" cy="12" r="5.200" fill="#dfe5e5" stroke="#999" /><path d="M11 9v3l2 1" stroke="#555" /><path d="M4 14c0-3 2-5 4-5" stroke="#27a34b" strokeWidth="2.500" /></Svg>}>History</Line>
        </div>
      </XGroup>
      <XGroup className="w-[129px]" label="Select">
        <div className="ml-[8px] mt-[3px]">
          <Line icon={<Tiles f={["#8ccbf5", "#8ccbf5", "#8ccbf5", "#8ccbf5"]} />}>Select all</Line>
          <Line icon={<Tiles f={["#f2f2f2", "#f2f2f2", "#f2f2f2", "#f2f2f2"]} />}>Select none</Line>
          <Line className="tracking-[-0.350px]" icon={<Tiles f={["#f2f2f2", "#8ccbf5", "#8ccbf5", "#f2f2f2"]} />}>Invert selection</Line>
        </div>
      </XGroup>
    </div>
  );
}

const Crumb = ({ className = "" }: P) => <Svg w={6} h={10} c={`text-[#999] ${className}`}><path d="M1 1l4 4-4 4" strokeWidth="1.400" /></Svg>;

function AddressRow() {
  return (
    <div className="flex h-[50px] items-start bg-[#191919] pt-[5px] text-[14px] tracking-[-0.200px] text-white">
      <div className="flex h-[40px] w-[134px] items-center">
        <Svg w={16} h={12} c="ml-[15px]"><path d="M16 6H1.500M6.500 1l-5 5 5 5" strokeWidth="1.900" /></Svg>
        <Svg w={16} h={12} c="ml-[24px] text-[#8a8a8a]"><path d="M0 6h14.500M9.500 1l5 5-5 5" strokeWidth="1.700" /></Svg>
        <Svg w={10} h={7} c="ml-[16px]"><path d="M1 1l4 4 4-4" strokeWidth="1.800" /></Svg>
        <Svg w={12} h={16} c="ml-[15px] mt-[3px]"><path d="M6 16V1.500M1 6.500l5-5 5 5" strokeWidth="1.900" /></Svg>
      </div>
      <div className="flex h-[39px] w-[691px] items-center border border-[#535353]">
        <Folder w={14} h={18} c="ml-[4px]" />
        <Crumb className="ml-[13px]" /><span className="ml-[11px] w-[74px] whitespace-nowrap tracking-[0.150px]">New folder</span>
        <Crumb className="ml-[10px]" /><span className="ml-[10px] w-[131px] whitespace-nowrap">Tournament Tracker</span>
        <Crumb className="ml-[9px]" /><span className="ml-[11px] w-[85px] whitespace-nowrap">Tracker Texts</span>
        <Svg w={12} h={8} c="ml-auto text-[#8a8a8a]"><path d="M1 1l5 5 5-5" strokeWidth="1.900" /></Svg>
        <Svg w={15} h={16} c="ml-[26px] mr-[10px] text-[#9a9a9a]"><path d="M11 3.500A6 6 0 1 1 4 3.500M4 .5v4H.5" strokeWidth="1.700" /></Svg>
      </div>
      <div className="ml-[12px] flex h-[39px] w-[186px] items-center overflow-hidden border border-[#535353] text-[#777]">
        <Magnifier s={16} c="ml-[17px]" /><span className="ml-[17px] whitespace-nowrap tracking-[-0.170px]">Search Tracker Texts</span>
      </div>
    </div>
  );
}

const pinned: { name: string; icon: React.ReactNode }[] = [
  { name: "Desktop", icon: <Svg w={18} h={14}><rect width="18" height="14" fill="#1197f5" stroke="none" /><path d="M1 13h16" stroke="#7cc8fb" strokeDasharray="2 10" /></Svg> },
  { name: "Downloads", icon: <Svg w={16} h={16}><path d="M4 0h8v7h4l-8 9-8-9h4z" fill="#2f95e8" stroke="none" /></Svg> },
  { name: "Documents", icon: <Svg w={14} h={18}><path d="M0 0h11l3 3v15H0z" fill="#f2f2f2" stroke="none" /><path d="M2 4h9M2 7h10M2 10h10M2 13h10M2 15.500h10" stroke="#7a8da0" /><path d="M4 3h5v3H4z" fill="#3089cf" stroke="none" /></Svg> },
  { name: "Pictures", icon: <Svg w={18} h={14}><rect x=".5" y=".5" width="17" height="13" fill="#74b5ea" stroke="#eee" strokeWidth="1.500" /><path d="M1.500 7c5-1 8 4 15 3v2.500h-15z" fill="#3d6a74" stroke="none" /></Svg> },
  { name: "Data (D:)", icon: <Svg w={18} h={11} c="mt-[4px]"><path d="M0 5.500L7 1l11 3v3l-6 4L0 8.500z" fill="#9a9a9a" stroke="none" /><path d="M0 5.500L7 1l11 3-6 4z" fill="#e4e4e4" stroke="none" /></Svg> },
  { name: "MY MUSIC", icon: <Folder c="mr-[2px]" /> },
];
const recent = ["Midnite Vultures", "New folder", "Resumes", "Song Machine, S"];

function NavPane() {
  return (
    <div className="flex w-[197px] shrink-0 bg-[#191919] text-[14px] tracking-[0.020px] text-white">
      <div className="h-[424px] w-[174px] overflow-hidden pt-[22px]">
        <div className="flex h-[29px] items-center bg-[#2f2f2f] pl-[32px]">
          <Svg w={16} h={16} c="mr-[7px]"><path d="M9 0l1.500 5.500L16 5l-4.800 4 1.800 6-5-3.600L2.500 16l2.300-6L0 6.200l6-.4z" fill="#2ba3ef" stroke="none" /></Svg>Quick access
        </div>
        {pinned.map((p) => (
          <div key={p.name} className="flex h-[30px] items-center pl-[40px]">
            <div className="flex w-[20px] justify-center">{p.icon}</div>
            <span className="ml-[5px] flex-1 whitespace-nowrap">{p.name}</span><Pin s={14} c="mr-[3px] mb-[2px]" />
          </div>
        ))}
        {recent.map((n) => (
          <div key={n} className="flex h-[30px] items-center pl-[40px]">
            <div className="flex w-[20px] justify-center"><Folder c="mr-[2px]" /></div>
            <span className="ml-[5px] whitespace-nowrap">{n}</span>
          </div>
        ))}
        <div className="mt-[10px] flex h-[30px] items-center pl-[30px]">
          <Svg w={20} h={13} c="mr-[5px]"><path d="M4 12.500C0 12.500-1 7 3.500 6 5 1 11-1 14 4c5 0 8 6 3.500 8.500z" fill="#1484d8" stroke="none" /><path d="M3 12.500L13 7l6 3c0 2-1 2.500-2 2.500z" fill="#31a8ee" stroke="none" /></Svg>OneDrive
        </div>
        <div className="mt-[10px] flex h-[30px] items-center pl-[30px]">
          <Svg w={20} h={17} c="mr-[5px]"><path d="M7 0l12 3v10L7 10z" fill="#38a5e8" stroke="none" /><path d="M1 12l10 1 6 2-2 2-13-1z" fill="#d5d5d5" stroke="none" /></Svg>This PC
        </div>
      </div>
      <div className="ml-[1px] flex h-[424px] w-[19px] flex-col items-center bg-[#171717]">
        <Svg w={10} h={7} c="mt-[8px] mr-[1px] text-[#777]"><path d="M1 6l4-4 4 4" strokeWidth="1.700" /></Svg>
        <div className="mt-[7px] h-[214px] w-[19px] bg-[#4d4d4d]" />
        <Svg w={10} h={7} c="mt-auto mb-[7px] mr-[1px] text-[#777]"><path d="M1 1l4 4 4-4" strokeWidth="1.700" /></Svg>
      </div>
    </div>
  );
}

const files = ["MatchupEntryModels", "MatchupModels", "PersonModels", "PrizeModels", "TeamModels", "TournamentModels"];

const CsvIcon = () => (
  <Svg w={18} h={20} c="mr-[7px] mb-[3px]">
    <path d="M3 0h10l4 4v15.500H3z" fill="#f4f4f4" stroke="none" /><path d="M13 0v4h4z" fill="#999" stroke="none" />
    <rect y="5" width="10" height="10" fill="#107c41" stroke="none" /><path d="M3 7.500l4 5M7 7.500l-4 5" stroke="#fff" strokeWidth="1.500" />
    <text x="10.700" y="14" fontSize="10.500" fontWeight="700" fill="#35b878" stroke="none">a</text>
  </Svg>
);

function FileList() {
  return (
    <div className="flex h-[424px] flex-1 flex-col bg-[#202020] text-[14px] text-[#ececec]">
      <div className="flex h-[34px] items-center text-[#d5d5d5]">
        <div className="relative flex h-full w-[391px] items-center pl-[24px]">Name
          <Svg w={10} h={6} c="absolute left-[199px] top-[2px] text-[#999]"><path d="M1 5l4-4 4 4" /></Svg></div>
        <Rule className="h-[33px] bg-[#555]" /><div className="w-[340px] pl-[7px]">Type</div>
        <Rule className="h-[33px] bg-[#555]" /><div className="w-[99px] pl-[7px]">Size</div>
        <Rule className="h-[33px] bg-[#555]" />
      </div>
      <div className="mt-[8px] flex-1 pl-[21px]">
        {files.map((f, i) => (
          <div key={f} className={`flex h-[27px] items-center border border-r-0 pl-[4px] ${i === 2 ? "border-[#636363] bg-[#1c1c1c]" : "border-transparent"}`}>
            <CsvIcon /><div className="w-[348px]">{f}</div>
            <div className="w-[340px] whitespace-nowrap tracking-[0.140px]">Microsoft Excel Comma Separated Values File</div>
            <div className="flex-1 pr-[15px] text-right">1 KB</div>
          </div>
        ))}
      </div>
      <div className="flex h-[20px] items-center bg-[#171717]">
        <Svg w={7} h={10} c="ml-[9px] text-[#888]"><path d="M6 1L2 5l4 4" strokeWidth="1.600" /></Svg>
        <div className="ml-[8px] h-[19px] w-[681px] bg-[#4d4d4d]" />
        <Svg w={7} h={10} c="ml-[119px] text-[#888]"><path d="M1 1l4 4-4 4" strokeWidth="1.700" /></Svg>
      </div>
    </div>
  );
}

function Explorer() {
  return (
    <div className="absolute left-[697px] top-[196px] h-[682px] w-[1035px] bg-[#191919] shadow-[0_0_0_1px_rgba(70,70,70,0.7),0_3px_18px_4px_rgba(0,0,0,0.350)]">
      <div className="flex h-[37px] items-center bg-black pl-[10px] text-white">
        <Folder /><Rule className="ml-[10px] h-[17px] bg-[#666]" />
        <Check w={14} h={17} c="ml-[15px]" /><Folder c="ml-[11px]" />
        <Svg w={8} h={8} c="ml-[12px]"><path d="M0 1h8" strokeWidth="1.300" /><path d="M1 4h6L4 7.500z" fill="currentColor" stroke="none" /></Svg>
        <Rule className="ml-[11px] h-[17px] bg-[#666]" />
        <div className="ml-[7px] w-[754px] text-[14px] tracking-[-0.200px]">Tracker Texts</div>
        <Svg w={12} h={2}><path d="M0 1h12" strokeWidth="1.200" /></Svg>
        <Svg w={12} h={12} c="ml-[46px]"><path d="M.6.6h10.800v10.800H.6z" strokeWidth="1.200" /></Svg>
        <Svg w={13} h={13} c="ml-[46px]"><path d="M.5.5l12 12M12.500.5l-12 12" strokeWidth="1.200" /></Svg>
      </div>
      <div className="flex h-[28px] bg-black text-center text-[13px] leading-[29px] text-white">
        <div className="w-[70px] bg-[#ae0b17] pr-[1px]">File</div>
        <div className="w-[69px] border-t border-[#2b2b2b] bg-[#202020] leading-[27px]">Home</div>
        <div className="w-[69px]">Share</div><div className="w-[61px]">View</div>
        <Svg w={14} h={9} c="ml-[720px] mt-[10px] text-[#ccc]"><path d="M1 8l6-6 6 6" strokeWidth="2" /></Svg>
        <div className="ml-[9px] mt-[5px] h-[19px] w-[19px] rounded-full bg-[#0a6cd6] text-[13px] font-bold leading-[19px]">?</div>
      </div>
      <ExplorerRibbon />
      <AddressRow />
      <div className="flex h-[424px] overflow-hidden"><NavPane /><FileList /></div>
      <div className="flex h-[29px] items-center bg-[#333] pl-[17px] text-[14px] tracking-[-0.100px] text-[#ddd]">
        <span className="w-[60px]">6 items</span><Rule className="h-[12px] bg-[#ddd]" />
        <div className="ml-[896px] flex h-full w-[28px] items-center justify-center border-x border-[#888] bg-[#666] pr-[10px]">
          <Svg w={6} h={16}><path d="M0 0h6v16H0z" fill="#e8e8e8" stroke="none" /><path d="M3 1.500v3M3 6.500v3M3 11.500v3" stroke="#7a5560" strokeWidth="2.500" /></Svg>
        </div>
        <Svg w={18} h={14} c="ml-[5px]"><rect x=".7" y=".7" width="16.600" height="12.600" fill="#7fbdf0" stroke="#f2f2f2" strokeWidth="1.500" /><path d="M1.500 7c5-1 8 3 15 2.500v3h-15z" fill="#2f6a78" stroke="none" /></Svg>
      </div>
    </div>
  );
}

/* ---------- Taskbar ---------- */

function Slot({ active, open, children }: { active?: boolean; open?: boolean; children: React.ReactNode }) {
  return (
    <div className={`relative flex w-[62px] shrink-0 items-center justify-center ${active ? "bg-[#5d5e60]" : ""}`}>
      {children}
      {(open || active) && <div className={`absolute bottom-0 h-[3px] bg-[#f89aa4] ${active ? "inset-x-0" : "inset-x-[5px]"}`} />}
    </div>
  );
}

function Taskbar() {
  return (
    <div className="flex h-[50px] bg-[linear-gradient(90deg,#383838_0px,#383838_880px,#40362f_940px,#40362f_1040px,#383838_1090px,#383a3e_1190px,#333c48_1240px,#333c48_1320px,#383838_1360px,#333c48_1440px,#3d3a2b_1545px,#201f20_1640px,#3a3729_1740px,#201f1f_1810px,#201f1f_1920px)] text-white">
      <div className="flex w-[60px] items-center justify-center bg-[#40362e]">
        <Svg w={20} h={20}><path d="M0 3l8.500-1.200V9.500H0zM9.500 1.600L20 0v9.500H9.500zM0 10.500h8.500v7.700L0 17zM9.500 10.500H20V20L9.500 18.400z" fill="#fff" stroke="none" /></Svg>
      </div>
      <div className="flex w-[430px] items-center border border-[#5a5a5a] bg-[#333]">
        <Magnifier s={20} c="ml-[14px] text-[#e5e5e5]" /><span className="ml-[15px] text-[17.500px] tracking-[0.050px] text-[#d8d8d8]">Type here to search</span>
      </div>
      <Slot><Svg w={20} h={20} c="-ml-[2px]"><circle cx="10" cy="10" r="8.300" strokeWidth="2.700" /></Svg></Slot>
      <Slot><Svg w={21} h={20} c="-ml-[4px]"><path d="M1 0v4h12V0M1 20v-3h12v3M1 6.500h12v8H1zM18 0v20" strokeWidth="1.300" /><path d="M16.500 6h3v3.500h-3z" fill="#fff" stroke="none" /></Svg></Slot>
      <Slot open>
        <Svg w={27} h={27} c="-ml-[2px]"><circle cx="13.500" cy="13.500" r="13.500" fill="#fcc934" stroke="none" /><path d="M13.500 13.500L1.800 6.700A13.500 13.500 0 0 1 25.200 6.700z" fill="#db4437" stroke="none" /><path d="M13.500 7.500h11.900A13.500 13.500 0 0 0 1.800 6.700l6 10z" fill="#db4437" stroke="none" /><path d="M1.800 6.700A13.500 13.500 0 0 0 12.500 27l6-10.500-5 3z" fill="#0f9d58" stroke="none" /><circle cx="13.500" cy="13.500" r="6.200" fill="#f5f5f5" stroke="none" /><circle cx="13.500" cy="13.500" r="5" fill="#4285f4" stroke="none" /></Svg>
      </Slot>
      <Slot active>
        <Svg w={28} h={24} c="-ml-[2px]"><path d="M0 1h12v5H0z" fill="#dc9a10" stroke="none" /><path d="M0 5h12l3-3h13v21H0z" fill="#fbd062" stroke="none" /><path d="M5 24V14h18v10h-4.500v-5h-9v5z" fill="#3a96dd" stroke="none" /></Svg>
      </Slot>
      <Slot>
        <Svg w={30} h={28} c="-ml-[2px]"><path d="M0 11L15 0l15 11z" fill="#1061ae" stroke="none" /><path d="M0 11h30v17H0z" fill="#2cb4f4" stroke="none" /><path d="M3 11h24l-12 8z" fill="#f2f2f2" stroke="none" /><path d="M15 20l15 8V11z" fill="#1c8fe0" stroke="none" /></Svg>
      </Slot>
      <Slot open>
        <Svg w={26} h={27} c="-ml-[2px]"><path d="M0 0h26v15L14 27H0z" fill="#fcd209" stroke="none" /><path d="M14 14h12L14 27z" fill="#4a4a4a" stroke="none" /><path d="M26 14v13H14z" fill="#e8a200" stroke="none" /></Svg>
        <div className="absolute bottom-0 right-[5px] h-[3px] w-[11px] bg-[#b9757c]" />
      </Slot>
      <Slot open>
        <Svg w={28} h={28} c="ml-[1px]"><path d="M0 4q0-2 2-2h20q2 0 2 2v23l-5-4H2q-2 0-2-2z" fill="#7586d0" stroke="none" /><path d="M5 15l2-6 4-1h3l4 1 2 6-3 2-9 0z" fill="#fff" stroke="none" /><circle cx="9" cy="13" r="1.500" fill="#7586d0" stroke="none" /><circle cx="19" cy="20" r="8.500" fill="#ef4747" stroke="none" /><circle cx="19" cy="20" r="3.500" fill="#fff" stroke="none" /></Svg>
      </Slot>
      <Slot open>
        <Svg w={30} h={30} c="-ml-[2px]"><path d="M13 2l4 4h8l4-5 1 14-8 2-11-4z" fill="#777069" stroke="none" /><circle cx="18" cy="9" r="2.500" fill="#eee" stroke="#222" /><circle cx="24" cy="9" r="2" fill="#eee" stroke="#222" /><path d="M0 13l9-1 2 4h19v13H0z" fill="#f7f9fa" stroke="none" /><path d="M0 29h30M5 13v16" stroke="#9fb4c8" /><path d="M11 13l10 5 9-2" stroke="#b9b5b0" strokeWidth="2.500" /></Svg>
      </Slot>
      <Slot open>
        <Svg w={30} h={30} c="-ml-[1px]"><path d="M6 0h14l8 7v22H6z" fill="#16334f" stroke="none" /><path d="M12 8h12l5 5v16H12z" fill="#f1f3f5" stroke="none" /><path d="M15 15h9M15 19h11M15 23h11" stroke="#1f4e79" strokeWidth="1.700" /><path d="M0 12c4-4 8-4 12-1 2-5 7-8 13-7M1 6c4-3 8-2 11 0 2-3 6-5 10-5" stroke="#dfe5ea" strokeWidth="2" /></Svg>
      </Slot>
      <Slot open>
        <Svg w={29} h={27} c="-ml-[3px]"><path d="M7 0h22v27H7z" fill="#1f9c5c" stroke="none" /><path d="M18 0h11v7H18z" fill="#33c481" stroke="none" /><path d="M7 0h11v7H7z" fill="#21a366" stroke="none" /><path d="M7 14h22v13H7z" fill="#17703f" stroke="none" /><rect y="6" width="16" height="16" rx="1.500" fill="#0e7a3f" stroke="none" /><path d="M5 10l6 8M11 10l-6 8" stroke="#fff" strokeWidth="2.200" /></Svg>
      </Slot>
      <div className="ml-auto flex w-[263px] items-center">
        <Svg w={16} h={10}><path d="M1 9l7-7.500L15 9" strokeWidth="1.500" /></Svg>
        <Svg w={19} h={12} c="ml-[13px]"><path d="M1 .8h15v10.400H1zM18 4v4" strokeWidth="1.500" /><path d="M3 3h8v6H3z" fill="#fff" stroke="none" /></Svg>
        <Svg w={16} h={16} c="ml-[13px]"><path d="M1 15C1 7 7 1 15 1M5 15C5 9.500 9.500 5 15 5M9 15c0-3 3-6 6-6" strokeWidth="1.200" /><circle cx="13.500" cy="14" r="1.500" fill="#fff" stroke="none" /></Svg>
        <Svg w={20} h={16} c="ml-[10px]"><path d="M1 5h3l4-4v14l-4-4H1z" strokeWidth="1.200" /><path d="M11 5q2 3 0 6M13.500 3q4 5 0 10" strokeWidth="1.200" /><path d="M16 1q5 7 0 14" strokeWidth="1.200" opacity=".4" /></Svg>
        <div className="ml-[10px] flex w-[77px] flex-col items-center whitespace-nowrap text-[14px] leading-[23px] tracking-[-0.150px]"><span>2:08 PM</span><span>10/28/2020</span></div>
        <Svg w={32} h={34} c="ml-[18px] mt-[7px]"><path d="M0 2h20v15h-8l-4 4v-4H0z" fill="#fff" stroke="none" /><path d="M4 6h12M4 9.500h12M4 13h12" stroke="#222" strokeWidth="1.200" /><circle cx="20" cy="22" r="10" fill="#2c2b2b" stroke="#999" /><text x="20" y="27" textAnchor="middle" fontSize="14" fill="#fff" stroke="none">1</text></Svg>
        <Rule className="ml-[12px] h-[50px] bg-[#666]" />
      </div>
    </div>
  );
}

export default function App() {
  return (
    <div className="relative h-[1080px] w-[1920px] overflow-hidden bg-[#f1f1f1] font-['Open_Sans',sans-serif]">
      <TitleBar />
      <RibbonTabs />
      <Ribbon />
      <Notice title="POSSIBLE DATA LOSS" text="Some features might be lost if you save this workbook in the comma-delimited (.csv) format." />
      <Notice title="NOTICE" text="Most features are disabled because your Office product is inactive. To use for free, sign in." />
      <FormulaBar />
      <Sheet />
      <SheetTabs />
      <StatusBar />
      <Taskbar />
      <Explorer />
    </div>
  );
}
